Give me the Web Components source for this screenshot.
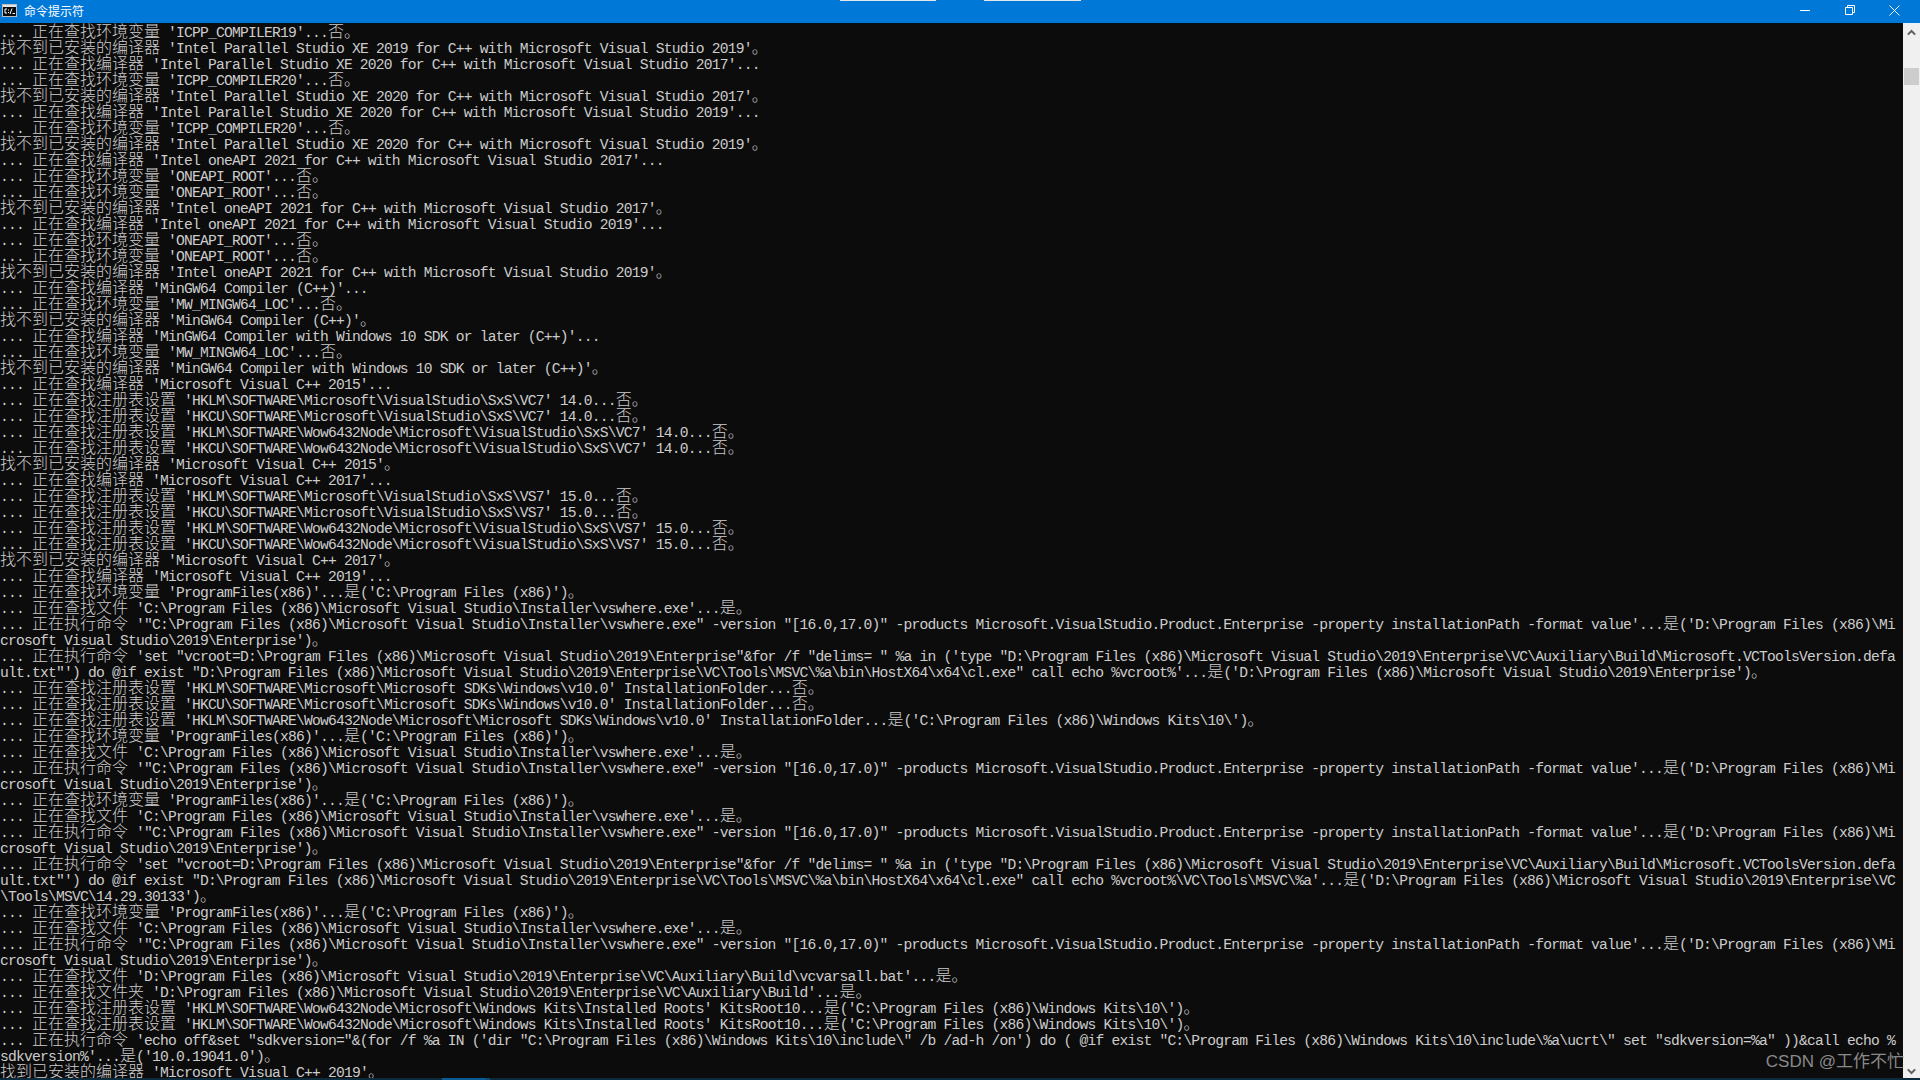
<!DOCTYPE html>
<html lang="zh"><head><meta charset="utf-8"><style>
html,body{margin:0;padding:0;height:100%;background:#0c0c0c;overflow:hidden}
</style></head><body>
<cmd-window><cmd-titlebar slot="title">命令提示符</cmd-titlebar><cmd-output slot="output"></cmd-output><cmd-scrollbar slot="scroll"></cmd-scrollbar></cmd-window>
<script>
class CmdWindow extends HTMLElement{constructor(){super();this.attachShadow({mode:'open'}).innerHTML=`<style>
:host{display:grid;grid-template:23px 1fr / 1fr 17px;width:1920px;height:1080px;position:relative;background:#0c0c0c;overflow:hidden}
::slotted([slot=title]){grid-column:1/3}
.mark{position:absolute;right:16px;top:1051px;font:17px/22px "Liberation Sans","Noto Sans CJK SC",sans-serif;color:#8a8a8a;white-space:nowrap}
.edge{position:absolute;left:0;right:0;bottom:0;height:2px;background:#0b2a3e}
.tab{position:absolute;bottom:0;left:442px;width:44px;height:2px;background:#0a5a94}
.tab2{position:absolute;bottom:0;left:486px;width:4px;height:2px;background:#0d4a75}
</style><slot name="title"></slot><slot name="output"></slot><slot name="scroll"></slot><div class="edge"></div><div class="tab"></div><div class="tab2"></div><div class="mark">CSDN @工作不忙</div>`}}
class CmdTitlebar extends HTMLElement{constructor(){super();this.attachShadow({mode:'open'}).innerHTML=`<style>
:host{display:flex;align-items:flex-start;height:23px;background:#0078d7;color:#fff;position:relative;font:12px "Noto Sans CJK SC",sans-serif;padding-right:3px}
.ico{width:16px;height:14px;margin:4px 6px 0 2px;flex:none}
.t{flex:1;line-height:22px}
.b{width:45px;height:20px;display:flex;align-items:center;justify-content:center;flex:none}
.cap{position:absolute;top:0;height:1px;background:#e6e6e6}
</style>
<svg class="ico" viewBox="0 0 16 14"><rect x=".5" y=".5" width="14" height="12" fill="#0c0c0c" stroke="#bdbdbd"/><rect x="1" y="1" width="13" height="2" fill="#e4e4e4"/><path d="M5 5H3v4h2M6.500 5.500v1M6.500 8v1M8 10l2-5.500M10.500 9.500h2.500" fill="none" stroke="#fff"/></svg>
<span class="t"><slot></slot></span>
<span class="b"><svg width="10" height="10" viewBox="0 0 10 10"><path d="M0 5.500H10" stroke="#fff" fill="none"/></svg></span>
<span class="b"><svg width="10" height="10" viewBox="0 0 10 10"><path d="M.5 2.500h7v7h-7zM2.500 2.500V.5h7v7h-2" stroke="#fff" fill="none"/></svg></span>
<span class="b"><svg width="11" height="11" viewBox="0 0 11 11"><path d="M.5.5l10 10M10.500.5l-10 10" stroke="#fff" fill="none"/></svg></span>
<i class="cap" style="left:840px;width:96px"></i><i class="cap" style="left:984px;width:97px"></i>`}}
class CmdScrollbar extends HTMLElement{constructor(){super();this.attachShadow({mode:'open'}).innerHTML=`<style>
:host{display:block;background:#f0f0f0;position:relative}
.th{position:absolute;left:1px;right:1px;top:45px;height:17px;background:#cdcdcd}
svg{position:absolute;left:4px}
</style><svg style="top:6px" width="9" height="7" viewBox="0 0 9 7"><path d="M.8 5.600 4.500 2l3.700 3.600" fill="none" stroke="#606060" stroke-width="2"/></svg><div class="th"></div><svg style="bottom:5px" width="9" height="7" viewBox="0 0 9 7"><path d="M.8 1.400 4.500 5l3.700-3.600" fill="none" stroke="#606060" stroke-width="2"/></svg>`}}
const F='正在查找',E=F+'编译器',V=F+'环境变量',N='找不到已安装的编译器',R=F+'注册表设置',D='D:\\Program Files (x86)\\Microsoft Visual Studio\\2019\\Enterprise',S='Microsoft Visual Studio';
const pf=`... ${V} 'ProgramFiles(x86)'...是('C:\\Program Files (x86)')。`,
 vs=`... ${F}文件 'C:\\Program Files (x86)\\${S}\\Installer\\vswhere.exe'...是。`,
 ex=`... 正在执行命令 '"C:\\Program Files (x86)\\${S}\\Installer\\vswhere.exe" -version "[16.0,17.0)" -products Microsoft.VisualStudio.Product.Enterprise -property installationPath -format value'...是('D:\\Program Files (x86)\\Mi`,
 cr=`crosoft Visual Studio\\2019\\Enterprise')。`,
 st=`... 正在执行命令 'set "vcroot=${D}"&for /f "delims= " %a in ('type "${D}\\VC\\Auxiliary\\Build\\Microsoft.VCToolsVersion.defa`;
const LINES=[
`... ${V} 'ICPP_COMPILER19'...否。`,
`${N} 'Intel Parallel Studio XE 2019 for C++ with ${S} 2019'。`,
`... ${E} 'Intel Parallel Studio XE 2020 for C++ with ${S} 2017'...`,
`... ${V} 'ICPP_COMPILER20'...否。`,
`${N} 'Intel Parallel Studio XE 2020 for C++ with ${S} 2017'。`,
`... ${E} 'Intel Parallel Studio XE 2020 for C++ with ${S} 2019'...`,
`... ${V} 'ICPP_COMPILER20'...否。`,
`${N} 'Intel Parallel Studio XE 2020 for C++ with ${S} 2019'。`,
`... ${E} 'Intel oneAPI 2021 for C++ with ${S} 2017'...`,
`... ${V} 'ONEAPI_ROOT'...否。`,
`... ${V} 'ONEAPI_ROOT'...否。`,
`${N} 'Intel oneAPI 2021 for C++ with ${S} 2017'。`,
`... ${E} 'Intel oneAPI 2021 for C++ with ${S} 2019'...`,
`... ${V} 'ONEAPI_ROOT'...否。`,
`... ${V} 'ONEAPI_ROOT'...否。`,
`${N} 'Intel oneAPI 2021 for C++ with ${S} 2019'。`,
`... ${E} 'MinGW64 Compiler (C++)'...`,
`... ${V} 'MW_MINGW64_LOC'...否。`,
`${N} 'MinGW64 Compiler (C++)'。`,
`... ${E} 'MinGW64 Compiler with Windows 10 SDK or later (C++)'...`,
`... ${V} 'MW_MINGW64_LOC'...否。`,
`${N} 'MinGW64 Compiler with Windows 10 SDK or later (C++)'。`,
`... ${E} 'Microsoft Visual C++ 2015'...`,
`... ${R} 'HKLM\\SOFTWARE\\Microsoft\\VisualStudio\\SxS\\VC7' 14.0...否。`,
`... ${R} 'HKCU\\SOFTWARE\\Microsoft\\VisualStudio\\SxS\\VC7' 14.0...否。`,
`... ${R} 'HKLM\\SOFTWARE\\Wow6432Node\\Microsoft\\VisualStudio\\SxS\\VC7' 14.0...否。`,
`... ${R} 'HKCU\\SOFTWARE\\Wow6432Node\\Microsoft\\VisualStudio\\SxS\\VC7' 14.0...否。`,
`${N} 'Microsoft Visual C++ 2015'。`,
`... ${E} 'Microsoft Visual C++ 2017'...`,
`... ${R} 'HKLM\\SOFTWARE\\Microsoft\\VisualStudio\\SxS\\VS7' 15.0...否。`,
`... ${R} 'HKCU\\SOFTWARE\\Microsoft\\VisualStudio\\SxS\\VS7' 15.0...否。`,
`... ${R} 'HKLM\\SOFTWARE\\Wow6432Node\\Microsoft\\VisualStudio\\SxS\\VS7' 15.0...否。`,
`... ${R} 'HKCU\\SOFTWARE\\Wow6432Node\\Microsoft\\VisualStudio\\SxS\\VS7' 15.0...否。`,
`${N} 'Microsoft Visual C++ 2017'。`,
`... ${E} 'Microsoft Visual C++ 2019'...`,
pf,vs,ex,cr,st,
`ult.txt"') do @if exist "${D}\\VC\\Tools\\MSVC\\%a\\bin\\HostX64\\x64\\cl.exe" call echo %vcroot%'...是('${D}')。`,
`... ${R} 'HKLM\\SOFTWARE\\Microsoft\\Microsoft SDKs\\Windows\\v10.0' InstallationFolder...否。`,
`... ${R} 'HKCU\\SOFTWARE\\Microsoft\\Microsoft SDKs\\Windows\\v10.0' InstallationFolder...否。`,
`... ${R} 'HKLM\\SOFTWARE\\Wow6432Node\\Microsoft\\Microsoft SDKs\\Windows\\v10.0' InstallationFolder...是('C:\\Program Files (x86)\\Windows Kits\\10\\')。`,
pf,vs,ex,cr,pf,vs,ex,cr,st,
`ult.txt"') do @if exist "${D}\\VC\\Tools\\MSVC\\%a\\bin\\HostX64\\x64\\cl.exe" call echo %vcroot%\\VC\\Tools\\MSVC\\%a'...是('${D}\\VC`,
`\\Tools\\MSVC\\14.29.30133')。`,
pf,vs,ex,cr,
`... ${F}文件 '${D}\\VC\\Auxiliary\\Build\\vcvarsall.bat'...是。`,
`... ${F}文件夹 '${D}\\VC\\Auxiliary\\Build'...是。`,
`... ${R} 'HKLM\\SOFTWARE\\Wow6432Node\\Microsoft\\Windows Kits\\Installed Roots' KitsRoot10...是('C:\\Program Files (x86)\\Windows Kits\\10\\')。`,
`... ${R} 'HKLM\\SOFTWARE\\Wow6432Node\\Microsoft\\Windows Kits\\Installed Roots' KitsRoot10...是('C:\\Program Files (x86)\\Windows Kits\\10\\')。`,
`... 正在执行命令 'echo off&set "sdkversion="&(for /f %a IN ('dir "C:\\Program Files (x86)\\Windows Kits\\10\\include\\" /b /ad-h /on') do ( @if exist "C:\\Program Files (x86)\\Windows Kits\\10\\include\\%a\\ucrt\\" set "sdkversion=%a" ))&call echo %`,
`sdkversion%'...是('10.0.19041.0')。`,
`找到已安装的编译器 'Microsoft Visual C++ 2019'。`];
class CmdOutput extends HTMLElement{constructor(){super();const r=this.attachShadow({mode:'open'});
r.innerHTML=`<style>
:host{display:block;overflow:hidden;color:#ccc;font:14.667px/14px "Liberation Mono",monospace;letter-spacing:-.8px;white-space:pre}
div{height:16px;box-sizing:border-box;padding-top:3px}
b{font:300 16px/0 "Noto Sans CJK SC",sans-serif;letter-spacing:0}
</style>`;
const esc=s=>s.replace(/&/g,'&amp;').replace(/</g,'&lt;');
LINES.forEach(l=>{const d=document.createElement('div');d.innerHTML=l.split(/([\u3000-\u9fff]+)/).map((p,i)=>i%2?`<b>${p}</b>`:esc(p)).join('');r.appendChild(d)})}}
customElements.define('cmd-window',CmdWindow);customElements.define('cmd-titlebar',CmdTitlebar);customElements.define('cmd-scrollbar',CmdScrollbar);customElements.define('cmd-output',CmdOutput);
</script></body></html>
